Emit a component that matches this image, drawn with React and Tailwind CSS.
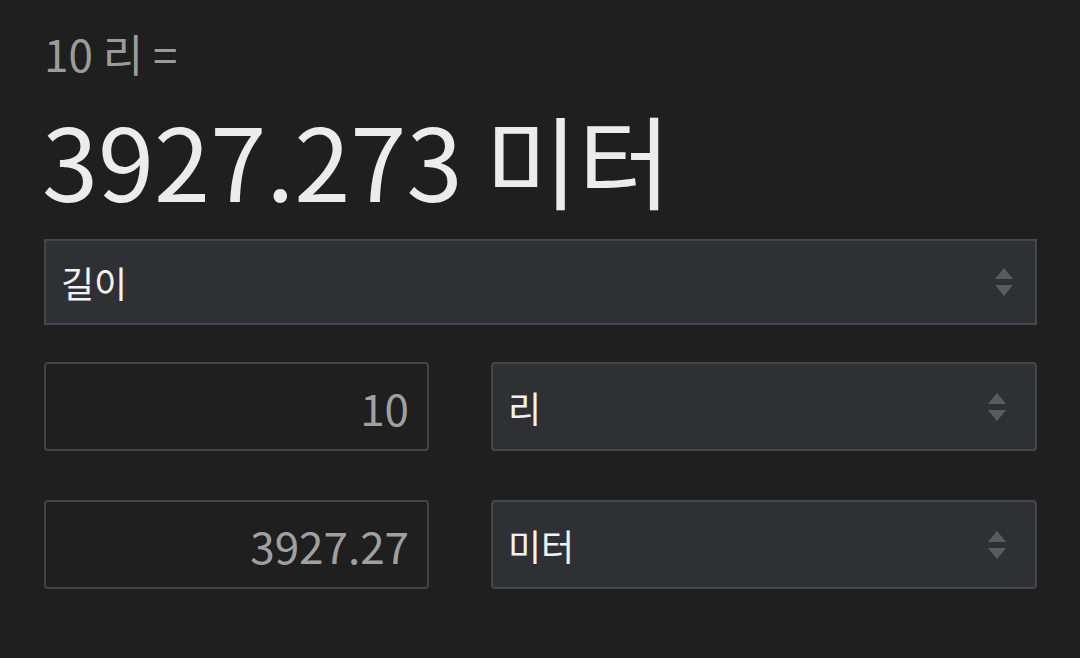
import React, { useState } from 'react';

const font = { fontFamily: '"Noto Sans CJK KR", "Noto Sans", sans-serif' };

const Arrows = () => (
  <svg width="22" height="34" viewBox="0 0 22 34" className="shrink-0">
    <path d="M11 3 L20 14 L2 14 Z" fill="#5a5b5e" />
    <path d="M2 20 L20 20 L11 31 Z" fill="#5a5b5e" />
  </svg>
);

const SelectBox = ({ label, className }) => (
  <div
    className={`flex items-center justify-between bg-[#2f3034] border-2 border-[#46474b] pl-[15px] text-[36px] text-[#f2f2f2] ${className}`}
  >
    <span className="leading-none">{label}</span>
    <Arrows />
  </div>
);

const NumberBox = ({ value }) => (
  <div className="flex items-center justify-end h-[89px] bg-[#1f1f1f] border-2 border-[#434343] rounded-[4px] pr-[18px] text-[44px] text-[#a0a0a0]">
    <span className="leading-none">{value}</span>
  </div>
);

export default function App() {
  const [from] = useState('10');
  const [to] = useState('3927.27');

  return (
    <div style={font} className="w-[1080px] h-[658px] bg-[#1f1f1f] pl-[44px] pr-[43px] pt-[27px] overflow-hidden">
      <p className="text-[44px] leading-[52px] text-[#9b9b9b]">10 리 =</p>
      <p className="text-[101px] leading-[120px] text-[#ececec] -ml-[2px] mt-[19px]">3927.273 미터</p>

      <SelectBox label="길이" className="h-[86px] mt-[21px] pr-[20px]" />

      <div className="grid grid-cols-[385px_1fr] gap-x-[62px] gap-y-[49px] mt-[37px]">
        <NumberBox value={from} />
        <SelectBox label="리" className="h-[89px] rounded-[4px] pr-[27px]" />
        <NumberBox value={to} />
        <SelectBox label="미터" className="h-[89px] rounded-[4px] pr-[27px]" />
      </div>
    </div>
  );
}
